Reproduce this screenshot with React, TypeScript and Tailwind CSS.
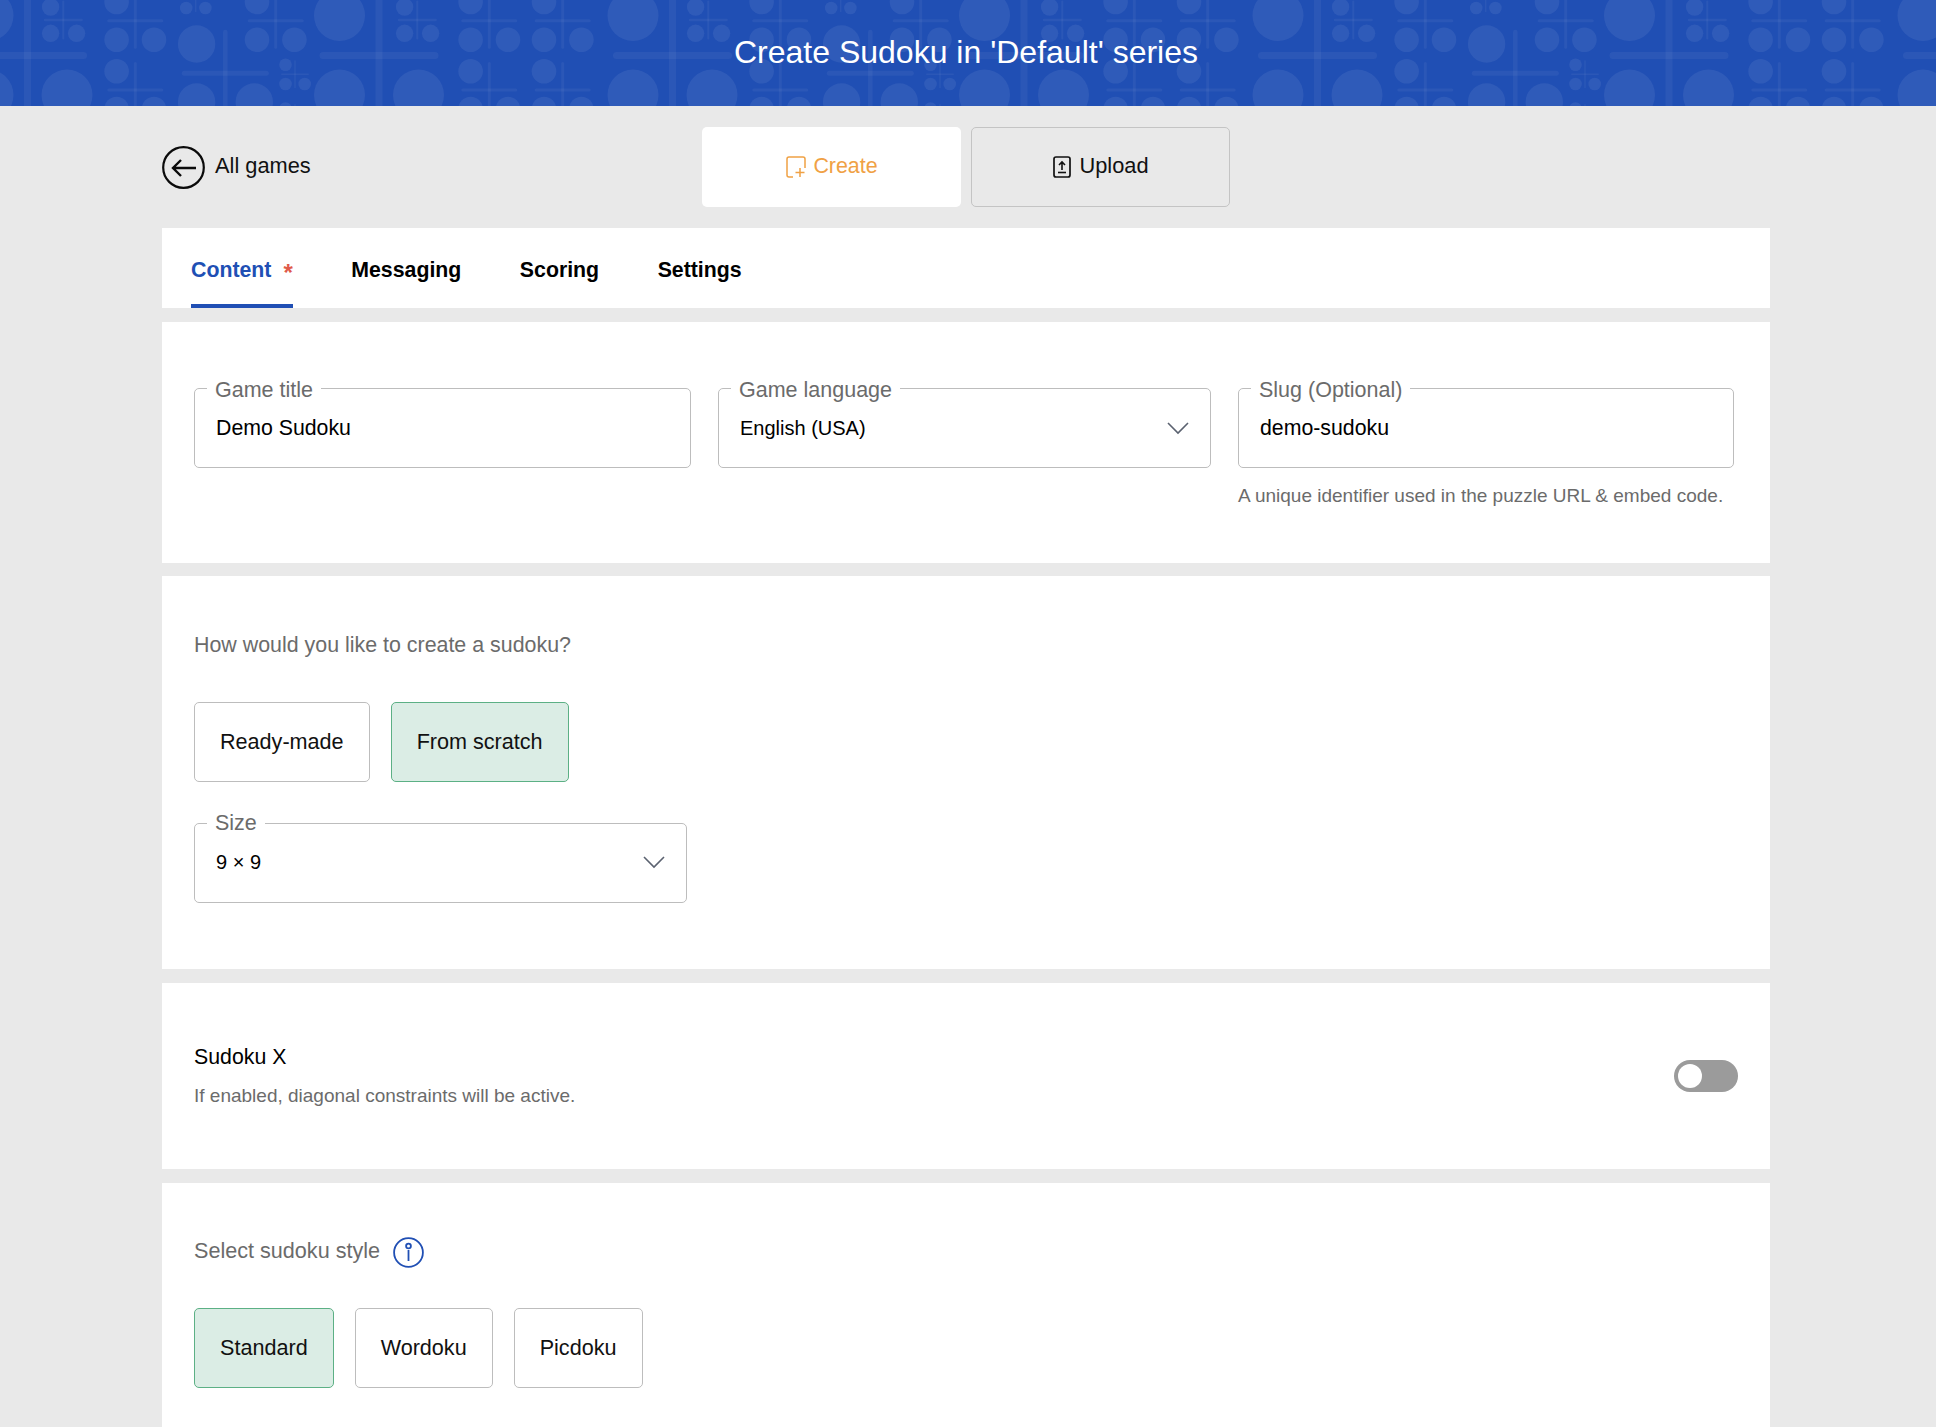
import React from "react";

type P = [number, number];

function Motif({ x, y, half, bar, stem, r, c }: { x: number; y: number; half: number; bar: number; stem: number; r: number; c: [P, P, P] }) {
  return (
    <g>
      <rect x={x - half} y={y - bar / 2} width={half * 2} height={bar} rx={bar / 2} fill="#fff" fillOpacity={0.05} />
      <rect x={x - stem / 2} y={y - half} width={stem} height={half * 2} rx={stem / 2} fill="#fff" fillOpacity={0.05} />
      {c.map(([dx, dy], i) => (
        <circle key={i} cx={x + dx} cy={y + dy} r={r} fill="#fff" fillOpacity={0.07} />
      ))}
    </g>
  );
}

const Big = ({ x }: { x: number }) => (
  <g>
    <rect x={x - 59.5} y={52} width={119} height={7} rx={3.5} fill="#fff" fillOpacity={0.05} />
    <rect x={x - 3.5} y={-10} width={7} height={130} fill="#fff" fillOpacity={0.05} />
    <circle cx={x - 39.5} cy={15.5} r={25.5} fill="#fff" fillOpacity={0.07} />
    <circle cx={x - 39.5} cy={95} r={25.5} fill="#fff" fillOpacity={0.07} />
    <circle cx={x + 39.5} cy={95} r={25.5} fill="#fff" fillOpacity={0.07} />
  </g>
);
const Small = ({ x, y }: { x: number; y: number }) => (
  <Motif x={x} y={y} half={19.5} bar={2.3} stem={2} r={8.7} c={[[-12.7, -13], [-12.7, 13.3], [13.3, 13.3]]} />
);
const Med = ({ x, y }: { x: number; y: number }) => (
  <Motif x={x} y={y} half={28} bar={3} stem={3} r={12.3} c={[[-18.7, -18.7], [-18.7, 19], [18.7, 19]]} />
);
const Tiny = ({ x, y }: { x: number; y: number }) => (
  <Motif x={x} y={y} half={14} bar={1.5} stem={1.5} r={6.3} c={[[-9.5, -9.5], [-9.5, 9.7], [9.7, 9.7]]} />
);

function BannerPattern() {
  return (
    <svg className="absolute inset-0 w-full h-full" aria-hidden="true">
      <defs>
        <g id="tile">
          <Big x={27.5} />
          <Small x={63.3} y={20} />
          <Med x={135.3} y={20.7} />
          <Med x={135.3} y={90} />
          <Tiny x={195.7} y={-1.7} />
          <Motif x={225.3} y={73.3} half={43.5} bar={5} stem={4.5} r={18.7} c={[[-28.7, -29.3], [-28.7, 28.7], [29, 28.7]]} />
          <Med x={275.7} y={20.7} />
          <Tiny x={295} y={74.3} />
          <Tiny x={295} y={118} />
          <Big x={379} />
          <Small x={417.3} y={20} />
          <Med x={489.3} y={20.7} />
          <Med x={489.3} y={90} />
          <Med x={562.7} y={20.7} />
          <Med x={562.7} y={90} />
        </g>
      </defs>
      <use href="#tile" x={0} />
      <use href="#tile" x={645} />
      <use href="#tile" x={1290} />
      <use href="#tile" x={1935} />
    </svg>
  );
}

function Field({ label, value, select, small, compact, className }: { label: string; value: string; select?: boolean; small?: boolean; compact?: boolean; className?: string }) {
  return (
    <fieldset className={`h-[92px] border border-[#bdbdbd] rounded-[5px] bg-white ${className ?? ""}`}>
      <legend className="ml-[12px] px-[8px] text-[21.5px] leading-[24px] text-[#6b6b6b]">
        <span className={compact ? "relative" : "relative top-[2px]"}>{label}</span>
      </legend>
      <div className={`flex items-center justify-between h-[56px] ${small ? "pl-[21px] pr-[18px] text-[20px]" : "pl-[21px] pr-[16px] pt-[2px] text-[21.3px]"} ${compact ? "pb-[2px]" : ""} text-black`}>
        <span>{value}</span>
        {select && (
          <svg width="24" height="14" viewBox="0 0 24 14" fill="none" stroke="#5b6270" strokeWidth="1.6" className="mr-[2px]">
            <path d="M2 2l10 10L22 2" />
          </svg>
        )}
      </div>
    </fieldset>
  );
}

function Choice({ label, active }: { label: string; active?: boolean }) {
  return (
    <button className={`h-[80px] px-[25px] rounded-[5px] border text-[21.6px] text-[#111] ${active ? "bg-[#dbede5] border-[#5cb085]" : "bg-white border-[#bdbdbd]"}`}>
      {label}
    </button>
  );
}

export default function App() {
  return (
    <div className="h-[1427px] overflow-hidden bg-[#e9e9e9] [font-family:'Liberation_Sans',Arial,sans-serif]">
      <header className="relative h-[106px] bg-[#204fb4] overflow-hidden">
        <BannerPattern />
        <div className="relative w-[1932px] h-full flex items-center justify-center pb-[2px]">
          <h1 className="text-[32px] text-white font-normal">Create Sudoku in 'Default' series</h1>
        </div>
      </header>

      <main className="ml-[162px] w-[1608px]">
        <div className="grid grid-cols-[1fr_auto_1fr] items-center pt-[21px] pb-[21px]">
          <div className="flex items-center gap-[10px] text-[21.8px] text-[#111]">
            <svg width="43" height="43" viewBox="0 0 43 43" fill="none" stroke="#0b0b0b">
              <circle cx="21.5" cy="21.5" r="20.3" strokeWidth="2.2" />
              <path d="M11 22h23M19 14l-8 8 8 8" strokeWidth="2.4" />
            </svg>
            <span className="relative -top-[1px]">All games</span>
          </div>
          <div className="flex gap-[10px]">
            <button className="w-[259px] h-[80px] pb-[2px] pl-[1px] rounded-[5px] bg-white flex items-center justify-center gap-[7px] text-[21.4px] text-[#f0a144]">
              <svg width="20" height="22" viewBox="0 0 20 22" fill="none" stroke="#f0a144" strokeWidth="1.5" className="relative top-[1px]">
                <path d="M7 21H3a2 2 0 0 1-2-2V3a2 2 0 0 1 2-2h14a2 2 0 0 1 2 2v9" />
                <path d="M14 12v9M9.5 16.5h9" />
              </svg>
              <span>Create</span>
            </button>
            <button className="w-[259px] h-[80px] pb-[2px] pl-[1px] rounded-[5px] border border-[#c4c4c4] bg-[#e9e9e9] flex items-center justify-center gap-[8px] text-[21.8px] text-[#111]">
              <svg width="18" height="22" viewBox="0 0 18 22" fill="none" stroke="#111" className="relative top-[1px]">
                <rect x="1" y="1" width="16" height="20" rx="2" strokeWidth="1.7" />
                <path d="M9 14V6M6 9l3-3 3 3" strokeWidth="1.6" />
                <path d="M5 16.5h8" strokeWidth="1.6" />
              </svg>
              <span>Upload</span>
            </button>
          </div>
          <div />
        </div>

        <nav className="h-[80px] bg-white flex pl-[29px] gap-[58.5px] text-[21.3px] font-bold text-black">
          <div className="relative h-full flex items-center pt-[5px] text-[#204fb4]">
            <span>Content</span>
            <span className="relative top-[2px] ml-[12px] text-[24px] text-[#e05a4a]">*</span>
            <span className="absolute left-0 right-0 bottom-0 h-[4px] bg-[#204fb4]" />
          </div>
          <div className="flex items-center pt-[5px]">Messaging</div>
          <div className="flex items-center pt-[5px]">Scoring</div>
          <div className="flex items-center pt-[5px]">Settings</div>
        </nav>

        <section className="mt-[14px] bg-white pt-[54px] pl-[32px] pb-[56px]">
          <div className="grid grid-cols-[497px_493px_496px] gap-x-[27px]">
            <Field label="Game title" value="Demo Sudoku" />
            <Field label="Game language" value="English (USA)" select small />
            <div>
              <Field label="Slug (Optional)" value="demo-sudoku" />
              <p className="mt-[17px] text-[19px] leading-[22px] text-[#6b6b6b] whitespace-nowrap">A unique identifier used in the puzzle URL &amp; embed code.</p>
            </div>
          </div>
        </section>

        <section className="mt-[13px] bg-white pt-[57px] pl-[32px] pb-[66px]">
          <p className="text-[21.4px] leading-[24px] text-[#6b6b6b]">How would you like to create a sudoku?</p>
          <div className="mt-[45px] flex gap-[21px]">
            <Choice label="Ready-made" />
            <Choice label="From scratch" active />
          </div>
          <Field label="Size" value="9 × 9" select small compact className="mt-[29px] w-[493px]" />
        </section>

        <section className="mt-[14px] bg-white pt-[62px] pb-[62px] pl-[32px] pr-[32px] flex items-center justify-between">
          <div>
            <p className="text-[21.3px] leading-[24px] text-black">Sudoku X</p>
            <p className="mt-[16px] text-[19px] leading-[22px] text-[#6b6b6b]">If enabled, diagonal constraints will be active.</p>
          </div>
          <div className="w-[64px] h-[32px] rounded-full bg-[#9b9b9b] flex items-center pl-[4px]">
            <span className="w-[24px] h-[24px] rounded-full bg-white" />
          </div>
        </section>

        <section className="mt-[14px] bg-white pt-[54px] pl-[32px] pb-[60px]">
          <div className="flex items-center gap-[13px] h-[30px]">
            <span className="relative -top-[1px] text-[21.6px] text-[#6b6b6b]">Select sudoku style</span>
            <svg width="31" height="31" viewBox="0 0 31 31" fill="none" stroke="#204fb4" strokeWidth="1.8">
              <circle cx="15.5" cy="15.5" r="14.4" />
              <circle cx="15.5" cy="9" r="2.4" />
              <path d="M15.5 13v11" />
            </svg>
          </div>
          <div className="mt-[41px] flex gap-[21px]">
            <Choice label="Standard" active />
            <Choice label="Wordoku" />
            <Choice label="Picdoku" />
          </div>
        </section>
      </main>
    </div>
  );
}
